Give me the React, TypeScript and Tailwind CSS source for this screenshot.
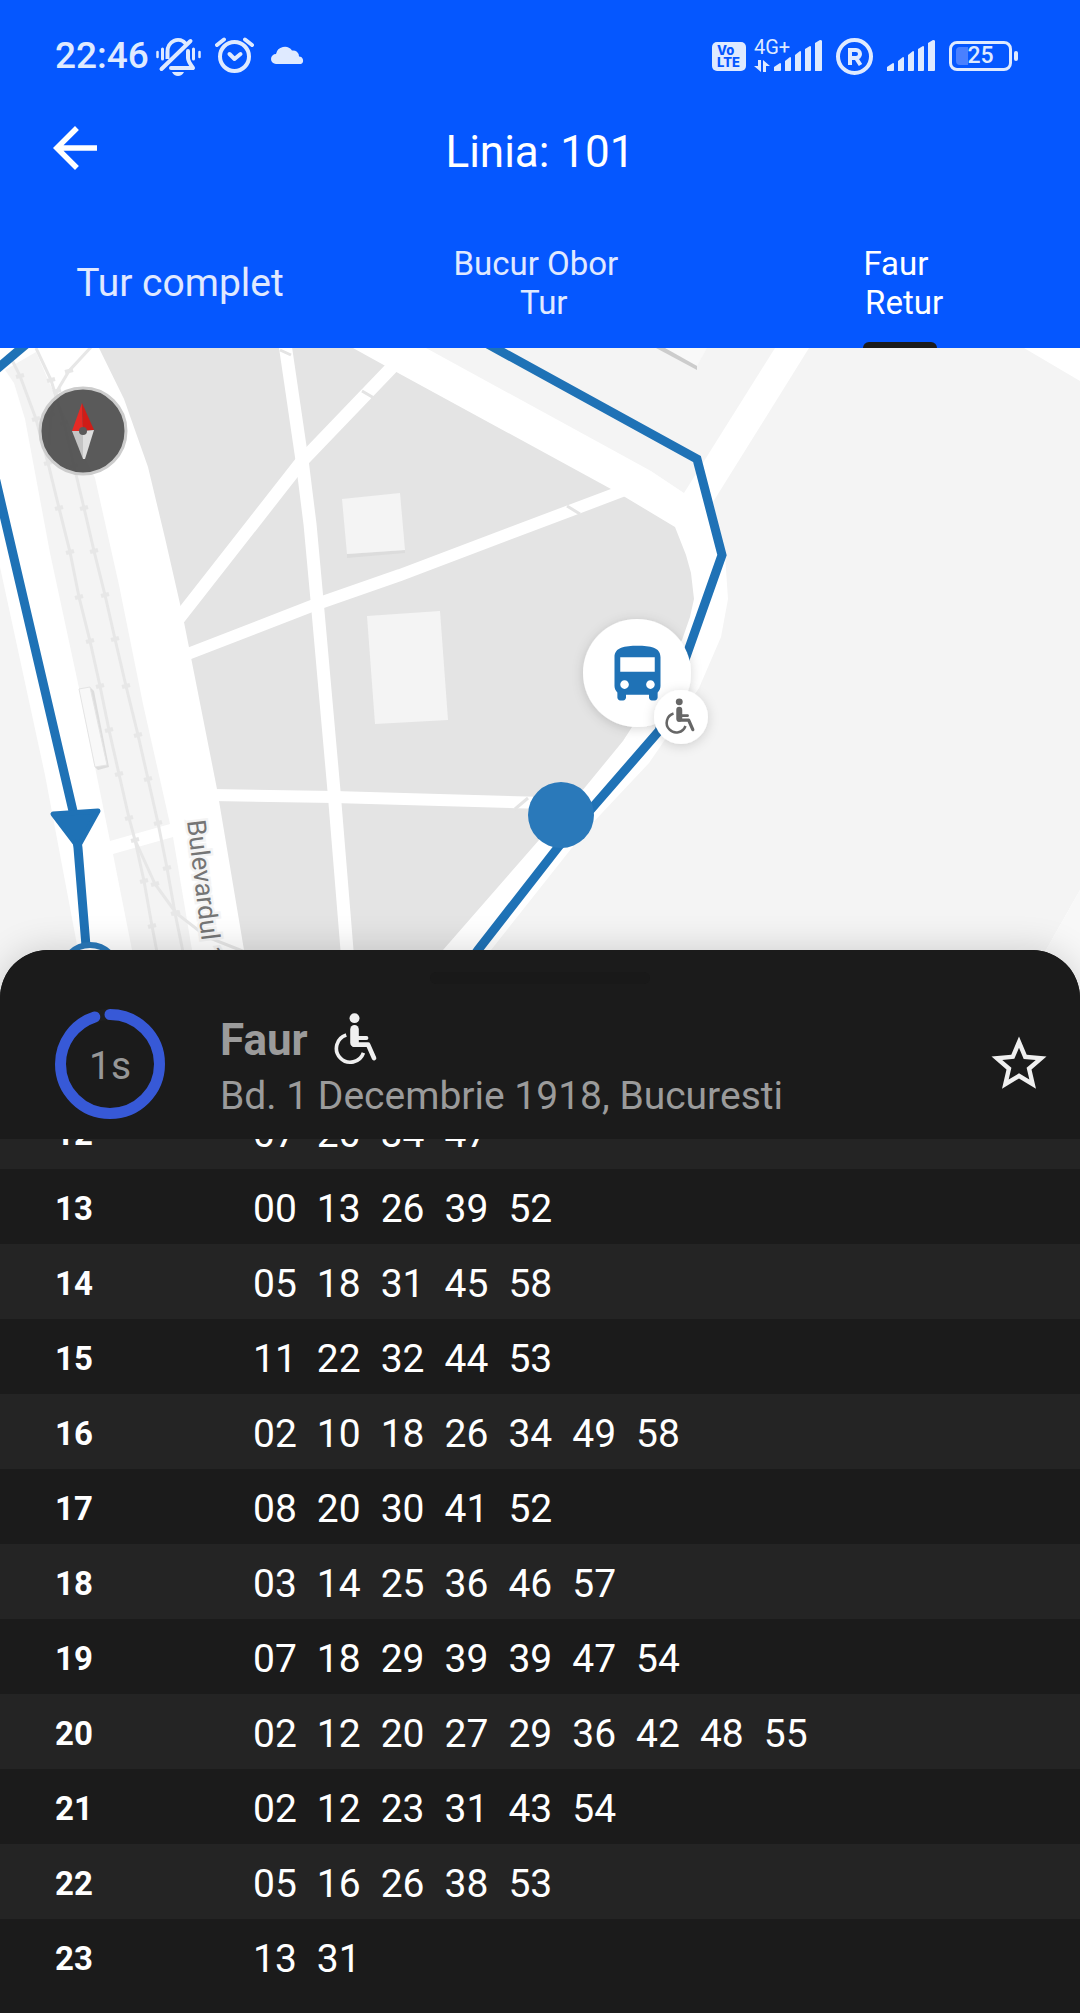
import { useState } from 'react';
import { MdArrowBack, MdDirectionsBus, MdStarBorder } from 'react-icons/md';

const tabs = [
  { id: 'full', label: 'Tur complet', size: 'text-[39px] leading-[46px]' },
  { id: 'tur', label: 'Bucur Obor \n Tur', size: 'text-[33px] leading-[39px]' },
  { id: 'retur', label: 'Faur \n Retur', size: 'text-[33px] leading-[39px]' },
];

const timetable = [
  { hour: '12', minutes: ['07', '20', '34', '47'] },
  { hour: '13', minutes: ['00', '13', '26', '39', '52'] },
  { hour: '14', minutes: ['05', '18', '31', '45', '58'] },
  { hour: '15', minutes: ['11', '22', '32', '44', '53'] },
  { hour: '16', minutes: ['02', '10', '18', '26', '34', '49', '58'] },
  { hour: '17', minutes: ['08', '20', '30', '41', '52'] },
  { hour: '18', minutes: ['03', '14', '25', '36', '46', '57'] },
  { hour: '19', minutes: ['07', '18', '29', '39', '39', '47', '54'] },
  { hour: '20', minutes: ['02', '12', '20', '27', '29', '36', '42', '48', '55'] },
  { hour: '21', minutes: ['02', '12', '23', '31', '43', '54'] },
  { hour: '22', minutes: ['05', '16', '26', '38', '53'] },
  { hour: '23', minutes: ['13', '31'] },
];

const railA: [number, number][] = [
  [12, 360], [20, 376], [36, 419], [48, 463], [59, 508], [70, 552], [79, 597], [90, 641], [100, 686],
  [109, 730], [119, 774], [129, 818], [135, 840], [144, 881], [152, 926], [168, 1010],
];
const railB: [number, number][] = [
  [36, 348], [51, 380], [64, 423], [74, 466], [84, 508], [94, 551], [105, 595], [115, 639], [126, 686],
  [138, 735], [148, 779], [158, 823], [167, 868], [175, 913], [195, 1010],
];
const railC: [number, number][] = [[92, 346], [69, 371], [57, 391], [51, 415], [48, 463]];
const railD: [number, number][] = [[135, 840], [155, 884], [176, 913], [207, 937], [245, 952]];

function WheelchairShape() {
  return (
    <g fill="none" stroke="currentColor" strokeLinecap="round" strokeLinejoin="round">
      <circle cx="62" cy="21" r="15" fill="currentColor" stroke="none" />
      <path d="M62 55V95" strokeWidth="26" />
      <path d="M62 81H98" strokeWidth="12" />
      <path d="M60 101H103L121 142" strokeWidth="14" />
      <path d="M37 72A42 42 0 1 0 89 126" strokeWidth="11" strokeLinecap="butt" />
    </g>
  );
}

function Signal() {
  return (
    <svg className="h-8 w-12" viewBox="0 0 48 32" fill="currentColor" aria-hidden="true">
      <path d="M0 31V27L6 23Q7 23 7 24V30Q7 31 6 31Z" />
      <path d="M11 31V21L16 17Q17 17 17 18V30Q17 31 16 31H12Z" />
      <path d="M21 31V15L26 11Q27 11 27 12V30Q27 31 26 31H22Z" />
      <path d="M31 31V9L36 6Q37 6 37 7V30Q37 31 36 31H32Z" />
      <path d="M41 31V3L46 0Q48 0 48 1V30Q48 31 47 31H42Z" />
    </svg>
  );
}

function StatusBar() {
  return (
    <div className="flex h-[110px] items-center justify-between pt-0.5 pl-[55px] pr-[62px] text-[#dfeaff]">
      <div className="flex items-center">
        <span className="mr-1.5 text-[37px] leading-[44px] font-medium">22:46</span>
        <svg className="mr-3 h-[42px] w-12" viewBox="156 34 48 42" fill="none" stroke="currentColor" strokeLinecap="round" aria-hidden="true">
          <path d="M168.500 58V51A10.500 11.500 0 0 1 187 43" strokeWidth="4" strokeLinecap="butt" />
          <path d="M162.500 68L191.500 40" strokeWidth="4" />
          <path d="M189 50V57Q189 60 194 67H172" strokeWidth="4" strokeLinejoin="round" />
          <path d="M173 71H185Q183 75 179 75T173 71Z" fill="currentColor" stroke="none" />
          <path d="M158.500 51V56M200.500 51V56" strokeWidth="2.500" />
          <path d="M163.500 48V58M194.500 48V58" strokeWidth="3" />
        </svg>
        <svg className="mr-4 h-[42px] w-10" viewBox="216 35 40 42" fill="none" stroke="currentColor" strokeWidth="4" strokeLinecap="round" strokeLinejoin="round" aria-hidden="true">
          <circle cx="235.500" cy="56.500" r="14.500" />
          <path d="M230.500 54L235.500 59L241.500 54" />
          <path d="M218 45L225 39.500M246 39.500L253 45" />
        </svg>
        <svg className="mb-1 h-[19px] w-[34px]" viewBox="0 0 34 19" fill="currentColor" aria-hidden="true">
          <path d="M5 19A5 5 0 0 1 5 9A9 9 0 0 1 21 5.500A6 6 0 0 1 28 11.500A4 4 0 0 1 30 19Z" />
        </svg>
      </div>

      <div className="flex items-center">
        <span className="mr-2 flex h-[29px] w-[34px] flex-col items-start justify-center rounded-[5px] bg-[#dfeaff] pl-[5px] font-[Inter,sans-serif] text-[13px] leading-[12px] font-extrabold text-[#0557ff]">
          <span>Vo</span>
          <span>LTE</span>
        </span>
        <div className="mr-3.5 flex items-end">
          <div className="flex h-8 w-5 flex-col justify-between">
            <span className="text-[20px] leading-[14px]">4G+</span>
            <svg className="h-3 w-[17px]" viewBox="0 0 17 12" fill="currentColor" aria-hidden="true">
              <path d="M4 0H7V12L0 6H4ZM9 12V0L16 6H12V12Z" />
            </svg>
          </div>
          <Signal />
        </div>
        <svg className="mr-3.5 size-[37px]" viewBox="0 0 37 37" fill="none" stroke="currentColor" aria-hidden="true">
          <circle cx="18.500" cy="18.500" r="16.500" strokeWidth="4" />
          <path d="M14 27V12H20A4 4 0 0 1 20 20H14M20 20L24.500 27" strokeWidth="4" />
        </svg>
        <Signal />
        <div className="ml-3.5 flex items-center gap-0.5">
          <div className="relative flex h-[30px] w-[63px] items-center justify-center rounded-[8px] border-[3px] border-[#dfeaff]">
            <span className="absolute top-[3px] left-1 h-[18px] w-3 rounded-l-[4px] bg-[#4a80ff]" />
            <span className="relative text-[23px] leading-[24px] font-medium">25</span>
          </div>
          <span className="h-[10px] w-1 rounded-[2px] bg-[#dfeaff]" />
        </div>
      </div>
    </div>
  );
}

function Rail({ points }: { points: [number, number][] }) {
  return (
    <g stroke="#e7e7e7" fill="none">
      <polyline points={points.map((p) => p.join(',')).join(' ')} strokeWidth="3" />
      {points.slice(1, -1).map(([x, y]) => (
        <path key={`${x}-${y}`} d={`M${x - 4} ${y + 1}L${x + 4} ${y - 1}`} strokeWidth="4" />
      ))}
    </g>
  );
}

function RouteMap() {
  return (
    <svg className="block h-[662px] w-full bg-white" viewBox="0 348 1080 662" preserveAspectRatio="xMidYMin slice" role="img" aria-label="Harta liniei 101">
      <defs>
        <filter id="marker-shadow" x="-50%" y="-50%" width="200%" height="200%">
          <feDropShadow dx="0" dy="2" stdDeviation="6" floodColor="#000000" floodOpacity="0.16" />
        </filter>
      </defs>

      {/* Land */}
      <g fill="#f4f4f4">
        <path d="M0 567L45 775L78 950L92 1010H0Z" />
        <path d="M5 370L36 352L53 391L95 478L119 585L143 704L170 824L110 841L79 688L50 553L25 419L14 383Z" />
        <path d="M113 854L173 837L192 950L202 1010H145L132 950Z" />
        <path d="M426 348L651 471L684 493L775 348Z" />
        <path d="M809 348L713 502L725 555L728 599L721 637L699 688L660 747L649 763L586 830L491 950L450 1010H1012L1080 890V381L1024 348Z" />
      </g>
      <path d="M1012 1010L1080 890V1010Z" fill="#f8f8f8" />
      <path d="M665 348H707L697 366Z" fill="#f9f9f9" />
      <path d="M656 348H665L697 366V370Z" fill="#cccccc" />

      {/* Park */}
      <path
        d="M99 348L124 399L148 467L165 538L183 617L217 789L244 950L254 1010H400L443 950L539 840L582 791L623 741L632 727L682 640L690 617L694 599L691 573L686 555L675 527L625 497L611 489L400 374L353 348Z"
        fill="#e4e4e4"
      />
      <g fill="none" stroke="#ffffff">
        <path d="M285 344L302 460L310 524L317 600L334 791L347 950L352 1010" strokeWidth="13" />
        <path d="M397 362L302 461L176 622" strokeWidth="13" />
        <path d="M180 657L317 604L400 575L625 490" strokeWidth="12" />
        <path d="M212 795L334 797L545 803" strokeWidth="12" />
      </g>
      <path d="M362 391L374 398M567 506L580 514M515 809L528 798M280 350L291 355" stroke="#e4e4e4" strokeWidth="3" />
      <path d="M347 554L405 550V553L347 558Z" fill="#dcdcdc" />
      <path d="M342 499L400 493L405 550L347 554Z" fill="#f4f4f4" />
      <path d="M367 616L440 611L448 720L375 724Z" fill="#f4f4f4" />

      <Rail points={railA} />
      <Rail points={railB} />
      <Rail points={railC} />
      <Rail points={railD} />
      <path d="M90 687L94 691L109 767L98 770L95 767L107 765Z" fill="#dddddd" />
      <path d="M79 689L90 687L107 765L95 767Z" fill="#f8f8f8" stroke="#e4e4e4" />

      <text
        transform="translate(187 821) rotate(83)"
        fontSize="26"
        fontFamily="Roboto, sans-serif"
        fill="#757575"
        stroke="#f4f4f4"
        strokeWidth="5"
        paintOrder="stroke"
      >
        Bulevardul 1
      </text>

      {/* Route */}
      <g fill="none" stroke="#1f72b6" strokeWidth="9">
        <path d="M-8 373L30 341" />
        <path d="M-8 464L73 811L78 848L86 946" />
        <path d="M484 342L697 459L722 555L687 654L659 731L559 846L478 950L436 1010" />
      </g>
      <path d="M53 814L98 811L78 847Z" fill="#1f72b6" stroke="#1f72b6" strokeWidth="5" strokeLinejoin="round" />
      <circle cx="90" cy="973" r="28" fill="#ffffff" stroke="#2a79ba" strokeWidth="6" />
      <circle cx="561" cy="815" r="33" fill="#2a79ba" />

      {/* Vehicle */}
      <circle cx="637" cy="673" r="54" fill="#ffffff" filter="url(#marker-shadow)" />
      <MdDirectionsBus x="603" y="640" size={69} color="#1f72b6" />
      <circle cx="681" cy="717" r="27" fill="#ffffff" filter="url(#marker-shadow)" />
      <g transform="translate(665 697) scale(0.23)" color="#666666">
        <WheelchairShape />
      </g>

      {/* Compass */}
      <circle cx="83" cy="431" r="43" fill="#484848" fillOpacity="0.9" stroke="#cccccc" strokeWidth="3" />
      <path d="M82 403L72 431H83Z" fill="#e52a25" />
      <path d="M82 403L94 430L83 431Z" fill="#cf1c17" />
      <path d="M72 431H83V459Z" fill="#c4c4c4" />
      <path d="M94 430L83 431V459H85Z" fill="#dedede" />
      <circle cx="83" cy="431" r="4" fill="#5a5a5a" />
    </svg>
  );
}

export default function App() {
  const [activeTab, setActiveTab] = useState('retur');

  return (
    <div className="flex min-h-screen flex-col bg-[#1b1b1b] font-[Roboto,sans-serif]">
      <header className="bg-[#0557ff]">
        <StatusBar />

        <div className="mb-6 grid h-[84px] grid-cols-[1fr_auto_1fr] items-center px-[42px] text-white">
          <button type="button" aria-label="Inapoi" className="justify-self-start pb-2">
            <MdArrowBack className="size-[66px]" />
          </button>
          <h1 className="text-[44px] leading-[50px]">Linia: 101</h1>
        </div>

        <nav role="tablist" className="grid h-[130px] grid-cols-3">
          {tabs.map((tab) => (
            <button
              key={tab.id}
              type="button"
              role="tab"
              aria-selected={activeTab === tab.id}
              onClick={() => setActiveTab(tab.id)}
              className={`relative flex items-center justify-center text-center whitespace-pre ${tab.size} ${
                activeTab === tab.id ? 'text-white' : 'text-[#e0e9ff]'
              }`}
            >
              {tab.label}
              {activeTab === tab.id && (
                <span className="absolute bottom-0 left-1/2 h-1.5 w-[74px] -translate-x-1/2 rounded-t-[6px] bg-[#1b1b1b]" />
              )}
            </button>
          ))}
        </nav>
      </header>

      <RouteMap />

      <main className="relative -mt-[60px] flex-1 rounded-t-[48px] bg-[#1b1b1b] shadow-[0_0_36px_rgba(0,0,0,0.16)]">
        {/* Stop details */}
        <div className="relative h-[189px] rounded-t-[48px] bg-[#1b1b1b] pt-[22px]">
          <div className="mx-auto h-3 w-[220px] rounded-full bg-[#191919]" />
          <div className="flex items-center pt-[21px] pr-7 pl-[55px]">
            <div className="grid size-[110px] place-items-center text-[#979797]">
              <svg className="col-start-1 row-start-1 size-[110px] -rotate-90" viewBox="0 0 110 110" fill="none" aria-hidden="true">
                <circle cx="55" cy="55" r="49.500" stroke="#202020" strokeWidth="11" />
                <circle
                  cx="55"
                  cy="55"
                  r="49.500"
                  stroke="#3759d7"
                  strokeWidth="11"
                  strokeLinecap="round"
                  pathLength="360"
                  strokeDasharray="342 360"
                />
              </svg>
              <span className="col-start-1 row-start-1 pt-1 text-[39px] leading-[46px]">1s</span>
            </div>
            <div className="ml-[55px] flex-1 pt-1.5 text-[#9b9b9b]">
              <div className="flex items-center gap-[26px]">
                <h2 className="text-[44px] leading-[56px] font-bold">Faur</h2>
                <svg className="mb-1 h-[54px] w-[45px] text-[#f0f0f0]" viewBox="0 0 136 162" role="img" aria-label="Accesibil">
                  <WheelchairShape />
                </svg>
              </div>
              <p className="text-[39px] leading-[54px]">Bd. 1 Decembrie 1918, Bucuresti</p>
            </div>
            <button type="button" aria-label="Adauga la favorite" className="text-[#f0f0f0]">
              <MdStarBorder className="size-[66px]" />
            </button>
          </div>
        </div>

        {/* Departures */}
        <div className="overflow-hidden">
          <table className="-mt-[45px] w-full table-fixed">
            <tbody>
              {timetable.map((row) => (
                <tr key={row.hour} className="h-[75px] text-white even:bg-[#1b1b1b] odd:bg-[#242424]">
                  <th scope="row" className="w-[253px] pt-1 pl-[55px] text-left text-[33px] leading-[40px] font-bold">
                    {row.hour}
                  </th>
                  <td className="pt-1">
                    <div className="flex gap-5 text-[39px] leading-[46px]">
                      {row.minutes.map((minute, index) => (
                        <span key={index}>{minute}</span>
                      ))}
                    </div>
                  </td>
                </tr>
              ))}
            </tbody>
          </table>
        </div>
      </main>
    </div>
  );
}
